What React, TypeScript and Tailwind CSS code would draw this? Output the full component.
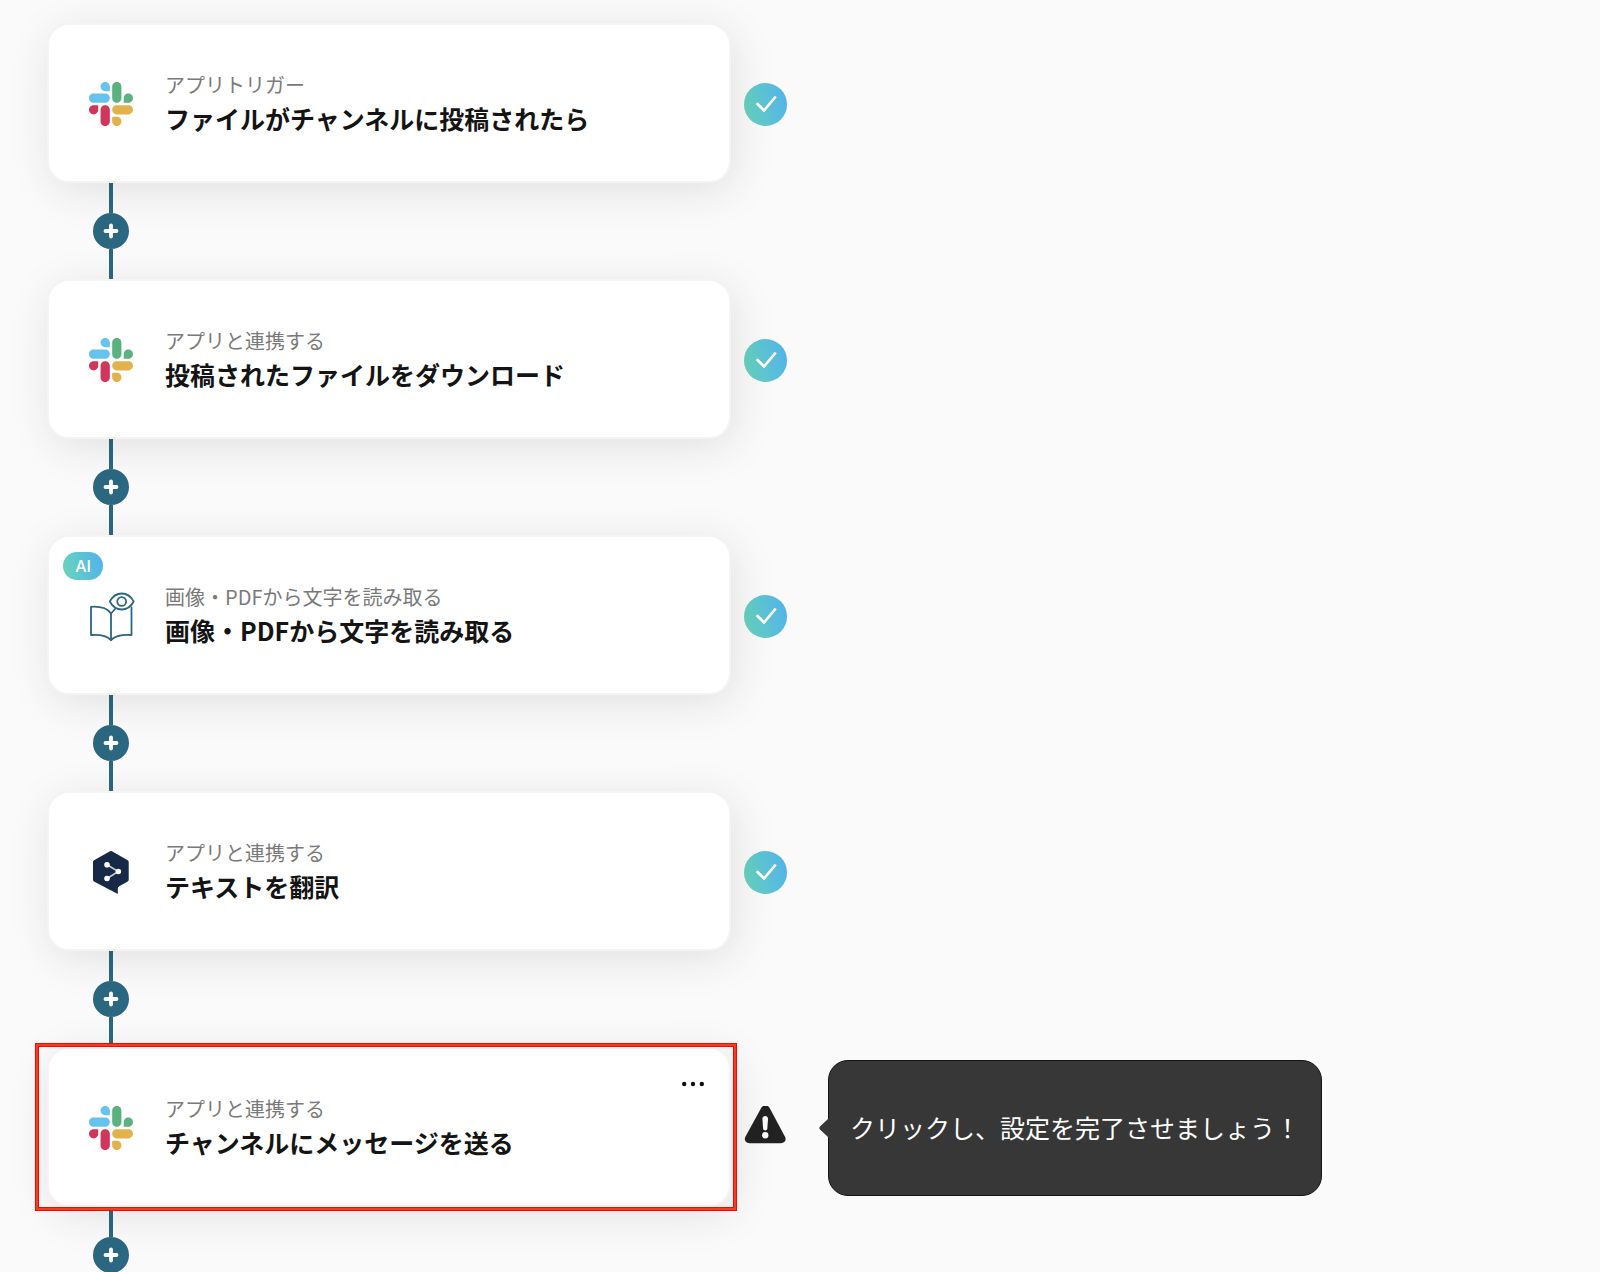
import type { ReactNode } from 'react'

type IconName = 'slack' | 'ocr' | 'deepl'
type Status = 'done' | 'warning'

interface Step {
  id: string
  icon: IconName
  label: string
  title: string
  status: Status
  ai?: boolean
  selected?: boolean
  hint?: string
}

const STEPS: Step[] = [
  {
    id: 'trigger',
    icon: 'slack',
    label: 'アプリトリガー',
    title: 'ファイルがチャンネルに投稿されたら',
    status: 'done',
  },
  {
    id: 'download',
    icon: 'slack',
    label: 'アプリと連携する',
    title: '投稿されたファイルをダウンロード',
    status: 'done',
  },
  {
    id: 'ocr',
    icon: 'ocr',
    label: '画像・PDFから文字を読み取る',
    title: '画像・PDFから文字を読み取る',
    status: 'done',
    ai: true,
  },
  {
    id: 'translate',
    icon: 'deepl',
    label: 'アプリと連携する',
    title: 'テキストを翻訳',
    status: 'done',
  },
  {
    id: 'message',
    icon: 'slack',
    label: 'アプリと連携する',
    title: 'チャンネルにメッセージを送る',
    status: 'warning',
    selected: true,
    hint: 'クリックし、設定を完了させましょう！',
  },
]

const CARD = 'rounded-[22px] border-2 border-[#f4f4f4] bg-white shadow-[4px_8px_44px_rgba(0,0,0,0.1)]'

function SlackIcon() {
  return (
    <svg viewBox="0 0 122.8 122.8" className="size-11" aria-hidden="true">
      <path
        fill="#d0355c"
        d="M25.8 77.6c0 7.1-5.8 12.9-12.9 12.9S0 84.7 0 77.6s5.8-12.9 12.9-12.9h12.9v12.9zm6.5 0c0-7.1 5.8-12.9 12.9-12.9s12.9 5.8 12.9 12.9v32.3c0 7.1-5.8 12.9-12.9 12.9s-12.9-5.8-12.9-12.9V77.6z"
      />
      <path
        fill="#66c3ed"
        d="M45.2 25.8c-7.1 0-12.9-5.8-12.9-12.9S38.1 0 45.2 0s12.9 5.8 12.9 12.9v12.9H45.2zm0 6.5c7.1 0 12.9 5.8 12.9 12.9s-5.8 12.9-12.9 12.9H12.9C5.8 58.1 0 52.3 0 45.2s5.8-12.9 12.9-12.9h32.3z"
      />
      <path
        fill="#5cb180"
        d="M97 45.2c0-7.1 5.8-12.9 12.9-12.9s12.9 5.8 12.9 12.9-5.8 12.9-12.9 12.9H97V45.2zm-6.5 0c0 7.1-5.8 12.9-12.9 12.9s-12.9-5.8-12.9-12.9V12.9C64.7 5.8 70.5 0 77.6 0s12.9 5.8 12.9 12.9v32.3z"
      />
      <path
        fill="#e2b34b"
        d="M77.6 97c7.1 0 12.9 5.8 12.9 12.9s-5.8 12.9-12.9 12.9-12.9-5.8-12.9-12.9V97h12.9zm0-6.5c-7.1 0-12.9-5.8-12.9-12.9s5.8-12.9 12.9-12.9h32.3c7.1 0 12.9 5.8 12.9 12.9s-5.8 12.9-12.9 12.9H77.6z"
      />
    </svg>
  )
}

function OcrIcon() {
  return (
    <svg
      viewBox="0 0 48 48"
      className="size-12 overflow-visible"
      fill="none"
      stroke="#2c6781"
      strokeWidth="1.8"
      strokeLinejoin="round"
      strokeLinecap="round"
      aria-hidden="true"
    >
      <path d="M24 21.5C20.5 16.5 13 14.2 4 14.8V43c8.5-.6 16 1 20 5 4-4 11.500-5.600 20.500-5V15.500" />
      <path d="M24 48V21.500l4.500-5" />
      <path d="M22.800 9.500C25.500 4.500 29.800 1.500 34.700 1.500S44 4.500 46.700 9.500C44 14.500 39.600 17.500 34.700 17.500S25.500 14.500 22.800 9.500z" />
      <circle cx="34.700" cy="9.500" r="4.400" />
    </svg>
  )
}

function DeeplIcon() {
  return (
    <svg viewBox="0 0 48 48" className="size-12" aria-hidden="true">
      <path
        fill="#162a47"
        d="M23 3.300q1-.6 2 0l15.700 9q1 .6 1 1.800v17.600q0 1.200-1 1.800l-8.400 4.800q-1.500.9-1.500 2.400v5.400L7 33.500q-1-.6-1-1.800V14.100q0-1.200 1-1.800z"
      />
      <path d="M20 16.800 31.300 23.500 20 30.500" fill="none" stroke="#c5cad2" strokeWidth="1.600" />
      <circle cx="20" cy="16.800" r="2.800" fill="#fff" />
      <circle cx="31.300" cy="23.500" r="2.800" fill="#fff" />
      <circle cx="20" cy="30.500" r="2.800" fill="#fff" />
    </svg>
  )
}

const ICONS: Record<IconName, ReactNode> = {
  slack: <SlackIcon />,
  ocr: <OcrIcon />,
  deepl: <DeeplIcon />,
}

function StatusMark({ status }: { status: Status }) {
  if (status === 'warning') {
    return (
      <svg viewBox="0 0 44 44" className="size-11 shrink-0" aria-hidden="true">
        <path
          fill="#222"
          d="M17.300 1.800c1.800-3.200 6.400-3.200 8.200 0l15.500 28.900c1.800 3.400-.4 6.500-4 6.500H5.400c-3.600 0-5.800-3.100-4-6.500z"
        />
        <path fill="#fff" d="M18.400 13.100c-.2-4 5.800-4 5.600 0l-.7 9.600c-.3 2.300-3.900 2.300-4.200 0z" />
        <circle cx="21.200" cy="29.300" r="3.200" fill="#fff" />
      </svg>
    )
  }
  return (
    <span className="flex size-[43px] shrink-0 items-center justify-center rounded-full bg-linear-75 from-[#6bd5b9] to-[#50b0ed]">
      <svg viewBox="0 0 22 18" className="h-[18px] w-[22px]" fill="none" aria-hidden="true">
        <path d="M2.500 9 9 15.500 20 2.500" stroke="#fff" strokeWidth="2.700" strokeLinecap="round" strokeLinejoin="round" />
      </svg>
    </span>
  )
}

function Connector() {
  return (
    <div className="ml-[46px] flex h-24 w-9 flex-col items-center">
      <span className="w-1 flex-1 bg-[#2c6781]" />
      <button type="button" aria-label="+" className="flex size-9 items-center justify-center rounded-full bg-[#2c6781]">
        <svg viewBox="0 0 16 16" className="size-4" aria-hidden="true">
          <path d="M8 2.500v11M2.500 8h11" stroke="#fff" strokeWidth="3.800" strokeLinecap="round" />
        </svg>
      </button>
      <span className="w-1 flex-1 bg-[#2c6781]" />
    </div>
  )
}

function Hint({ text }: { text: string }) {
  return (
    <div className="relative ml-10 flex h-[136px] items-center rounded-[20px] border border-[#151515] bg-[#373737] px-[21px]">
      <svg viewBox="0 0 10 20" className="absolute top-1/2 -left-2.5 h-5 w-2.5 -translate-y-1/2" aria-hidden="true">
        <path d="M10 0v20L1 11.600q-1.400-1.600 0-3.200z" fill="#373737" />
      </svg>
      <p className="text-[25px] whitespace-nowrap text-white">{text}</p>
    </div>
  )
}

function StepRow({ step }: { step: Step }) {
  return (
    <div className="flex items-center">
      <div className="relative w-full max-w-[684px]">
        <div className={`${CARD} relative flex h-40 items-center gap-[30px] pt-0.5 pl-[38px]`}>
          {step.ai && (
            <span className="absolute top-[15px] left-3.5 flex h-7 w-10 items-center justify-center rounded-full bg-linear-75 from-[#6bd5b9] to-[#50b0ed] font-[Inter,sans-serif] text-base font-medium text-white">
              AI
            </span>
          )}
          <span className="flex size-12 items-center justify-center">{ICONS[step.icon]}</span>
          <div>
            <p className="text-[20px] leading-7 text-[#7a7a7a]">{step.label}</p>
            <h2 className="text-[25px] leading-[38px] font-bold text-[#141414]">{step.title}</h2>
          </div>
          {step.selected && (
            <button
              type="button"
              aria-label="…"
              className="absolute top-[23px] right-5 flex h-6 w-8 items-center justify-center"
            >
              <svg viewBox="0 0 24 6" className="h-1.5 w-6" fill="#111" aria-hidden="true">
                <circle cx="3.200" cy="3" r="2.200" />
                <circle cx="12" cy="3" r="2.200" />
                <circle cx="20.800" cy="3" r="2.200" />
              </svg>
            </button>
          )}
        </div>
        {step.selected && (
          <div className="pointer-events-none absolute -inset-y-1 -right-1.5 -left-3 z-10 border border-[#ef0b00]">
            <div className="h-full border-2 border-[#f23d22]">
              <div className="h-full border border-[#ef0b00]" />
            </div>
          </div>
        )}
      </div>
      <div className="ml-[13px] flex items-center pt-0.5">
        <StatusMark status={step.status} />
        {step.hint && <Hint text={step.hint} />}
      </div>
    </div>
  )
}

export default function App() {
  return (
    <main className="h-screen overflow-hidden bg-[#fafafa] pt-[23px] pl-[47px] font-['Noto_Sans_CJK_JP',sans-serif]">
      <ol>
        {STEPS.map((step) => (
          <li key={step.id}>
            <StepRow step={step} />
            <Connector />
          </li>
        ))}
      </ol>
      {/* next slot, below the fold */}
      <div className={`${CARD} h-40 w-full max-w-[684px]`} />
    </main>
  )
}
